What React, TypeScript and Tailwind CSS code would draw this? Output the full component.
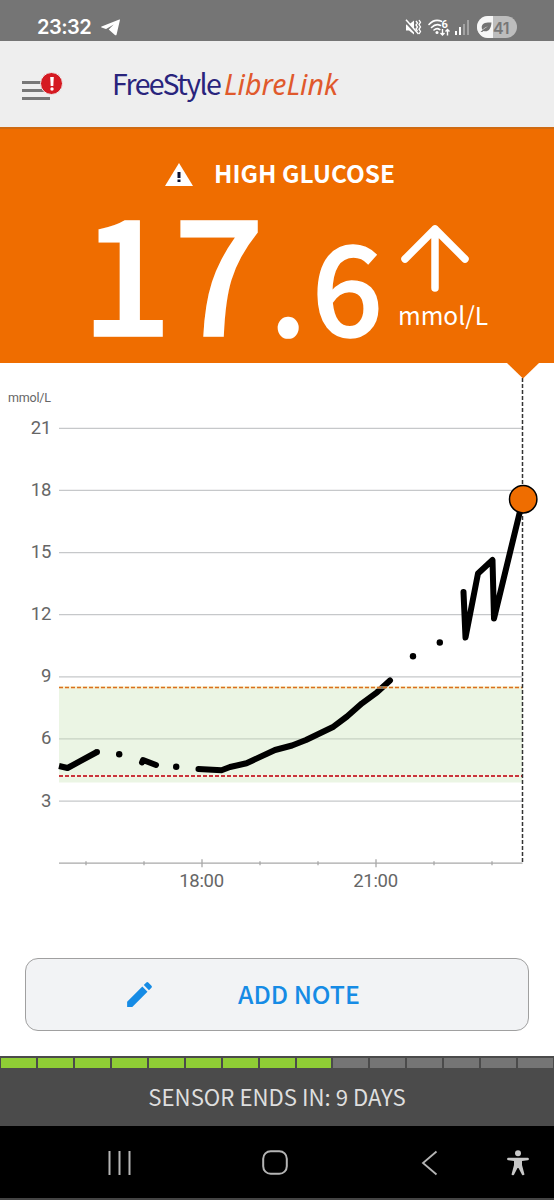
import React from 'react';
import { MdEdit } from 'react-icons/md';

type Point = [number, number];

const CHART_LEFT = 59;
const CHART_RIGHT = 522.5;
const ZERO_Y = 500.2;
const PX_PER_MMOL = 20.71;
const PX_PER_HOUR = 58;

const yFor = (value: number) => ZERO_Y - value * PX_PER_MMOL;

const levels = [21, 18, 15, 12, 9, 6, 3];
const hours = [16, 17, 18, 19, 20, 21, 22, 23];

const traces: Point[][] = [
  [[59, 403], [67.5, 405], [97, 389]],
  [[142, 399.5], [143, 397], [156, 402]],
  [[198.5, 406], [221.5, 407.3], [230, 404], [246.5, 400.3], [275, 387], [292, 382.5], [306, 377], [333.5, 363.7], [347, 353.5], [362, 340.3], [377, 329.3], [390, 317.5]],
  [[463.5, 229], [465.5, 274.5], [478, 210.5], [492.5, 197], [494, 255.5], [523, 136]]
];

const dots: Point[] = [[119.2, 391.2], [176.2, 403.8], [413, 293.3], [439.8, 279.5]];

const SENSOR_DAYS = 15;
const SENSOR_USED = 9;

function StatusBar() {
  return <div className="flex h-[41px] items-center bg-[#757575] pl-[37px] pr-[37px] pt-[13px] text-white">
      <span className="w-[54px] font-['Inter','Roboto',sans-serif] text-[20px] font-semibold leading-none tracking-[-0.5px]">23:32</span>
      <svg width="19" height="17" viewBox="0 0 19 17" className="ml-[10px]">
        <path d="M18.3.6.6 7.4c-.7.3-.7.9 0 1.1l4.3 1.4.2.1 7.6-4.600-5 5.100 6.200 5.600c.8.5 1.500.3 1.700-.7L18.9 1.2c.1-.7-.1-.8-.6-.6Z" fill="currentColor" />
      </svg>
      <div className="ml-auto flex items-center">
        <svg width="17" height="17" viewBox="0 0 17 17" fill="none">
          <path d="M1 5.5h3l5-4v14l-5-4H1z" fill="#fff" />
          <path d="M.5 2.5 12.500 15.5" stroke="#757575" strokeWidth="2.500" />
          <path d="m1 .8 12.500 14.2" stroke="#fff" strokeWidth="1.5" />
          <path d="m11 2 1.5 2L11 6l1.5 2L11 10l1.5 2M14 1l1.5 2.3L14 5.6l1.5 2.3-1.5 2.3 1.5 2.3L14 15" stroke="#fff" strokeWidth="1.3" />
        </svg>
        <svg width="23" height="19" viewBox="0 0 23 19" fill="none" className="ml-[6px]">
          <path d="M1 6.5C5 2 9.500 1.700 13.500 3.300M3.500 9.500C6.500 6.500 10 6.200 12.500 7.500M6 12c2-1.700 4-1.700 5.800-.4" stroke="#fff" strokeWidth="1.600" strokeLinecap="round" />
          <circle cx="9" cy="14.500" r="1.500" fill="#fff" />
          <text x="13.500" y="9.500" fill="#fff" className="font-['Roboto',sans-serif] text-[11px] font-bold">6</text>
          <path d="M14.500 11v6m-2-2 2 2 2-2M19.500 17.500v-6m-2 2 2-2 2 2" stroke="#fff" strokeWidth="1.400" />
        </svg>
        <div className="ml-[4px] flex h-[15px] items-end gap-[1.5px]">
          <span className="h-[4px] w-[2.500px] bg-white" />
          <span className="h-[8px] w-[2.500px] bg-white" />
          <span className="h-[11px] w-[2.500px] bg-[#a3a3a3]" />
          <span className="h-[15px] w-[2.500px] bg-[#a3a3a3]" />
        </div>
        <div className="ml-[8px] flex h-[22px] w-[40px] items-center overflow-hidden rounded-full bg-[#bdbdbd]">
          <div className="flex h-full w-[16px] items-center justify-end bg-[#f7f7f7] pr-px">
            <svg width="12" height="11" viewBox="0 0 12 11">
              <path d="M11.500.5C5 .2 2 1.500 1.700 5c0 1 .2 2 .7 2.800C4 6.500 5.500 5 8 4.200 5.500 5.800 3 7.500.500 10h1.700l1.300-1c4 1.200 7.500-1 8-8.500Z" fill="#737373" />
            </svg>
          </div>
          <span className="pt-px font-['Inter','Roboto',sans-serif] text-[16px] font-semibold leading-none tracking-[-0.3px] text-[#777]">41</span>
        </div>
      </div>
    </div>;
}

function Header() {
  return <header className="flex h-[88px] items-start border-b-2 border-[#cf6a12] bg-[#eeeeee] pl-[22px]">
      <button className="relative mt-[40px] flex w-[28px] flex-col gap-[5px]" aria-label="Menu">
        <span className="h-[3px] w-[24px] bg-[#777]" />
        <span className="h-[3px] w-[24px] bg-[#777]" />
        <span className="h-[3px] bg-[#777]" />
        <span className="absolute left-[18px] top-[-9px] flex h-[23px] w-[23px] items-center justify-center rounded-full border border-[#eeeeee] bg-[#d51a22]">
          <svg width="4" height="14" viewBox="0 0 4 14" fill="#fff">
            <path d="M.2 0h3.600l-.5 9H.7z" />
            <circle cx="2" cy="12" r="1.700" />
          </svg>
        </span>
      </button>
      <h1 className="ml-[62px] mt-[24px] flex h-[36px] items-baseline whitespace-nowrap leading-[36px]">
        <span className="w-[112px] font-['Noto_Sans_CJK_JP',sans-serif] text-[28.500px] tracking-[-1.6px] text-[#29247c]">FreeStyle</span>
        <span className="font-['Noto_Sans',sans-serif] text-[28.500px] italic text-[#e0592c]">LibreLink</span>
      </h1>
    </header>;
}

function GlucoseBanner() {
  return <section className="h-[234px] bg-[#ef6d00] font-['Noto_Sans_CJK_JP',sans-serif] text-white">
      <div className="flex h-[91px] items-center pl-[165px]">
        <svg width="28" height="23" viewBox="0 0 28 23">
          <path d="M14 0 28 23H0z" fill="#fff" />
          <path d="M12.500 9h3v6h-3zM12.500 16.500h3v2.500h-3z" fill="#0b1030" />
        </svg>
        <span className="ml-[21px] h-[29px] text-[24.400px] font-bold leading-[25px]">HIGH GLUCOSE</span>
      </div>
      <div className="flex h-[143px] pl-[81px]">
        <div className="flex h-[120px] w-[303px] items-baseline font-medium [-webkit-text-stroke:1.6px_white]">
          <span className="text-[160px] leading-[93px] tracking-[1px]">17</span>
          <span className="ml-[4px] text-[125px] leading-[93px] tracking-[5px]">.6</span>
        </div>
        <div className="ml-[14px] flex flex-col items-start">
          <svg width="68" height="68" viewBox="0 0 68 68" fill="none" className="ml-[3px] mt-[5px]">
            <path d="M34 63V4M4 34 34 4l30 30" stroke="#fff" strokeWidth="7.500" strokeLinecap="round" strokeLinejoin="round" />
          </svg>
          <span className="mt-[8px] text-[24.500px] leading-[28px]">mmol/L</span>
        </div>
      </div>
    </section>;
}

function GlucoseChart() {
  return <svg width="554" height="595" viewBox="0 0 554 595" fill="none" className="block font-['Roboto',sans-serif]">
      <path d={`M${CHART_LEFT} 323.500H${CHART_RIGHT}V419.500H${CHART_LEFT}Z`} fill="#ebf5e4" />
      <text x="8" y="39" fill="#666" className="text-[12.500px] tracking-[-0.2px]">mmol/L</text>
      {levels.map(level => <g key={level}>
          <path d={`M${CHART_LEFT} ${yFor(level)}H${CHART_RIGHT}`} stroke={level === 6 ? '#c7d2c3' : '#c6c8ca'} strokeWidth="1.300" />
          <text x="51" y={yFor(level) + 5.500} fill="#666" textAnchor="end" className="text-[18.500px] tracking-[-0.3px]">{level}</text>
        </g>)}
      <path d={`M${CHART_LEFT} ${ZERO_Y}H${CHART_RIGHT}`} stroke="#a8a8a8" strokeWidth="1.300" />
      {hours.map(hour => {
      const x = 202 + (hour - 18) * PX_PER_HOUR;
      const major = hour % 3 === 0;
      return <g key={hour}>
            <path d={`M${x} ${ZERO_Y - (major ? 4 : 2)}v${major ? 8 : 4}`} stroke="#a8a8a8" strokeWidth="1.300" />
            {major && <text x={x - 0.5} y="523.500" fill="#666" textAnchor="middle" className="text-[18.500px] tracking-[-0.3px]">{hour}:00</text>}
          </g>;
    })}

      {traces.map((trace, i) => <polyline key={i} points={trace.map(p => p.join(',')).join(' ')} stroke="#000" strokeWidth="6" strokeLinecap={i === 0 ? 'butt' : 'round'} strokeLinejoin="round" />)}
      <circle cx="97" cy="389" r="3" fill="#000" />
      {dots.map(([x, y]) => <circle key={x} cx={x} cy={y} r="3.200" fill="#000" />)}

      {/* target limits */}
      <path d={`M${CHART_LEFT} 324.500H${CHART_RIGHT}`} stroke="#ffedc4" strokeWidth="3" opacity=".5" />
      <path d={`M${CHART_LEFT} 324.500H${CHART_RIGHT}`} stroke="#d9701f" strokeWidth="1.400" strokeDasharray="4 2" />
      <path d={`M${CHART_LEFT} 413H${CHART_RIGHT}`} stroke="#fbf3e4" strokeWidth="3" opacity=".6" />
      <path d={`M${CHART_LEFT} 413H${CHART_RIGHT}`} stroke="#c9343c" strokeWidth="1.800" strokeDasharray="4 2" />

      {/* current reading */}
      <path d="M522.500 15V501" stroke="#333" strokeWidth="1.500" strokeDasharray="4 2" />
      <path d="M507 0h32l-16 15.500z" fill="#ef6d00" />
      <circle cx="523.200" cy="136.200" r="13.700" fill="#ef6d00" stroke="#000" strokeWidth="1.500" />
    </svg>;
}

function SensorFooter() {
  return <footer className="h-[70px] bg-[#4b4b4b]">
      <div className="flex h-[12px] gap-[2px] px-px pt-[2px]">
        {Array.from({ length: SENSOR_DAYS }, (_, day) => <span key={day} className={`h-[10px] flex-1 ${day < SENSOR_USED ? 'bg-[#8fce35]' : 'bg-[#757575]'}`} />)}
      </div>
      <p className="pt-[12px] text-center font-['Noto_Sans_CJK_JP',sans-serif] text-[22.200px] leading-[32px] text-[#dedede]">SENSOR ENDS IN: 9 DAYS</p>
    </footer>;
}

function NavigationBar() {
  return <nav className="flex h-[74px] items-center border-b-2 border-[#444] bg-black pl-[108px] pt-[2px]">
      <svg width="23" height="24" viewBox="0 0 23 24" stroke="#b5b5b5" strokeWidth="2">
        <path d="M1.500 0v24M11.500 0v24M21.500 0v24" />
      </svg>
      <svg width="26" height="26" viewBox="0 0 26 26" fill="none" className="ml-[131px]">
        <rect x="1.200" y="1.200" width="23.600" height="22.600" rx="7.500" stroke="#b5b5b5" strokeWidth="2" />
      </svg>
      <svg width="17" height="26" viewBox="0 0 17 26" fill="none" className="ml-[133px]">
        <path d="M15.500 1.500 2 13l13.500 11.500" stroke="#b5b5b5" strokeWidth="1.800" />
      </svg>
      <svg width="22" height="26" viewBox="0 0 22 26" fill="#c8c8c8" className="ml-[69px]">
        <circle cx="11" cy="3.200" r="3" />
        <path d="M1.300 7.800h19.400a1.200 1.200 0 0 1 0 2.400L15 11v4l2.500 9.500q-1.400 1.500-2.500.3L11.500 18h-1L7 24.800Q5.500 26 4.500 24.500L7 15v-4l-5.700-.8a1.200 1.200 0 0 1 0-2.400Z" />
      </svg>
    </nav>;
}

export default function App() {
  return <div className="h-[1200px] w-[554px] overflow-hidden bg-white">
      <StatusBar />
      <Header />
      <GlucoseBanner />
      <GlucoseChart />
      <div className="h-[98px] px-[25px]">
        <button className="flex h-[73px] w-full items-center rounded-[13px] border-[1.500px] border-[#a0a0a0] bg-[#f2f3f5] pl-[97px] text-[#168be5]">
          <MdEdit size={33} />
          <span className="ml-[82px] h-[27px] font-['Noto_Sans_CJK_JP',sans-serif] text-[24.800px] font-medium leading-[25px]">ADD NOTE</span>
        </button>
      </div>
      <SensorFooter />
      <NavigationBar />
    </div>;
}
